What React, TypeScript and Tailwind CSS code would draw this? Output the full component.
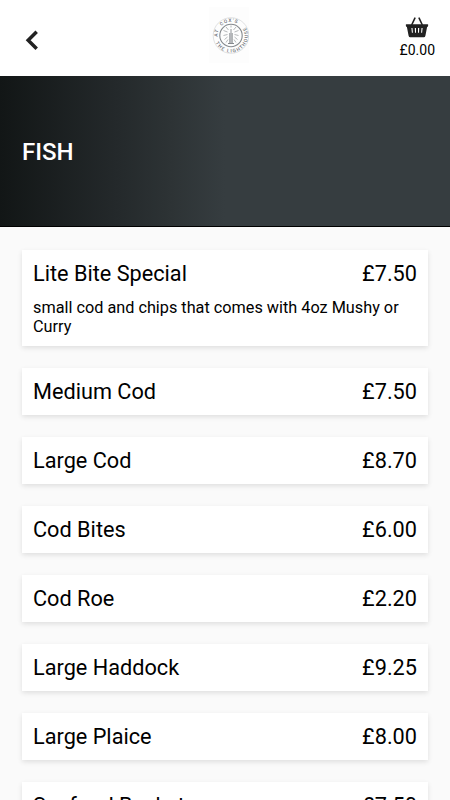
import React from 'react';

interface MenuItem {
  name: string;
  price: string;
  description?: string;
}

const items: MenuItem[] = [
  { name: 'Lite Bite Special', price: '£7.50', description: 'small cod and chips that comes with 4oz Mushy or Curry' },
  { name: 'Medium Cod', price: '£7.50' },
  { name: 'Large Cod', price: '£8.70' },
  { name: 'Cod Bites', price: '£6.00' },
  { name: 'Cod Roe', price: '£2.20' },
  { name: 'Large Haddock', price: '£9.25' },
  { name: 'Large Plaice', price: '£8.00' },
  { name: 'Seafood Basket', price: '£7.50' },
];

const Logo: React.FC = () => (
  <svg className="w-10 h-14 bg-[#fdfdfd]" viewBox="0 0 40 56">
    <defs>
      <path id="ringTop" d="M8.55 29.7 A13.5 13.5 0 0 1 32.3 19.8" />
      <path id="ringBottom" d="M6.6 35.7 A17 17 0 1 0 34 16.5" />
    </defs>
    <g fill="none" stroke="#85898d">
      <circle cx="22" cy="28.5" r="17.8" strokeWidth="0.4" opacity="0.6" />
      <circle cx="22" cy="28.5" r="11.2" strokeWidth="1.1" />
      <path d="M22 22v14.5M20.8 26v10.5M23.2 26v10.5" strokeWidth="0.9" />
      <path d="M19.5 23l-2.5-3M22 20.5v-2M24.5 23l2.5-3M18.5 25l-4-1.5M25.5 25l4-1.5M18.5 27.5l-4 1M25.5 27.5l4 1M18.5 30l-3 2.5M25.5 30l3 2.5M19 32.5l-2 3M25 32.5l2 3" strokeWidth="0.6" />
      <path d="M19 36.5h6" strokeWidth="1" />
    </g>
    <g fill="#6f7378" fontSize="4.8" fontWeight="500" fontFamily="Roboto, sans-serif">
      <text letterSpacing="0.9" wordSpacing="2">
        <textPath href="#ringTop">AT COX'S</textPath>
      </text>
      <text letterSpacing="1.15">
        <textPath href="#ringBottom">THE LIGHTHOUSE</textPath>
      </text>
    </g>
  </svg>
);

const BasketIcon: React.FC = () => (
  <svg className="w-6 h-6" viewBox="0 0 24 24" fill="none">
    <path d="M9.9 3.2L6.9 9.5M14.1 3.2L17.1 9.5" stroke="#222" strokeWidth="1.6" strokeLinecap="round" />
    <path
      fillRule="evenodd"
      fill="#222"
      d="M1.4 9.3h21.2q.7 0 .6.8l-.2 1.1q-.2.7-.9.7l-1.7 8.9q-.3 1.5-1.6 1.5H5.2q-1.3 0-1.6-1.5l-1.7-8.9q-.7 0-.9-.7L.8 10.1q-.1-.8.6-.8zM6.4 13.1l.5 4.7h1l-.4-4.7zM9.8 13.1l.2 4.7h1v-4.7zM13 13.1v4.7h1l.2-4.7zM16.5 13.1l-.4 4.7h1l.5-4.7z"
    />
  </svg>
);

const Card: React.FC<{ item: MenuItem }> = ({ item }) => (
  <div className="bg-white px-[11px] pt-[11px] pb-[10px] shadow-[0_2px_5px_rgba(0,0,0,0.11)]">
    <div className="flex justify-between text-[21.7px] leading-[26px]">
      <span>{item.name}</span>
      <span>{item.price}</span>
    </div>
    {item.description && (
      <p className="mt-[11px] text-[16.25px] leading-[19px]">{item.description}</p>
    )}
  </div>
);

export default function App() {
  return (
    <div className="h-[800px] w-full overflow-hidden bg-[#fafafa] font-[Roboto,sans-serif] text-black">
      <header className="relative flex h-[76px] items-start justify-between bg-white">
        <button className="ml-[24px] mt-[29px]" aria-label="Back">
          <svg className="w-4 h-[22px]" viewBox="0 0 16 22" fill="none">
            <path d="M12.7 2.7L4.2 11.2L12.7 19.7" stroke="#222" strokeWidth="3.5" />
          </svg>
        </button>
        <div className="absolute left-[209px] top-[7px]">
          <Logo />
        </div>
        <div className="mr-[15px] mt-[15px] flex flex-col items-center">
          <BasketIcon />
          <span className="mt-[2px] text-[14px] leading-[18px]">£0.00</span>
        </div>
      </header>

      <section className="flex h-[151px] items-center border-b border-black bg-[linear-gradient(90deg,#121616_0%,#24292b_26%,#2d3335_38%,#363d40_50%,#363d40_100%)] px-[22px]">
        <h1 className="mt-[2px] text-[24px] font-medium text-white">FISH</h1>
      </section>

      <main className="flex flex-col gap-[22px] px-[22px] pt-[23px]">
        {items.map((item) => (
          <Card key={item.name} item={item} />
        ))}
      </main>
    </div>
  );
}
